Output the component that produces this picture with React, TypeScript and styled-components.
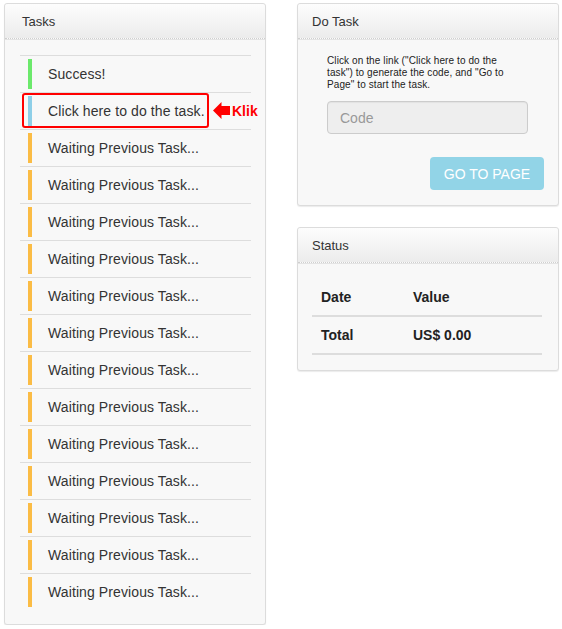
import React from 'react';
import styled, { createGlobalStyle } from 'styled-components';

const GlobalStyle = createGlobalStyle`
  body {
    margin: 0;
    background: #fff;
    font-family: "Liberation Sans", Arial, sans-serif;
    color: #333;
  }
`;

const Page = styled.div`
  display: flex;
  align-items: flex-start;
  gap: 31px;
  padding: 3px 0 0 4px;
`;

const Column = styled.div`
  display: flex;
  flex-direction: column;
  gap: 21px;
  width: 262px;
`;

const Panel = styled.div`
  width: 262px;
  box-sizing: border-box;
  background: #f8f8f8;
  border: 1px solid #dcdcdc;
  border-radius: 3px;
  box-shadow: 0 1px 1px rgba(0, 0, 0, 0.08);
`;

const PanelHeader = styled.div<{ $inset?: number }>`
  height: 34px;
  display: flex;
  align-items: center;
  padding-left: ${p => p.$inset ?? 17}px;
  font-size: 13px;
  color: #333;
  background: linear-gradient(#fdfdfd, #ececec);
  border-bottom: 1px dotted #cfcfcf;
  box-shadow: 0 1px 0 #e4e4e4;
  border-radius: 3px 3px 0 0;
`;

const TaskBody = styled.div`
  padding: 16px 14px 14px 15px;
`;

const TaskList = styled.ul`
  list-style: none;
  margin: 0;
  padding: 0;
`;

const TaskRow = styled.li`
  position: relative;
  display: flex;
  align-items: center;
  height: 36px;
  border-top: 1px solid #dddddd;
  padding-left: 8px;
  font-size: 14px;
  letter-spacing: 0.1px;
  color: #333;
`;

const Bar = styled.span<{ $color: string }>`
  width: 4px;
  height: 30px;
  margin-right: 16px;
  background: ${p => p.$color};
`;

const Highlight = styled.span`
  position: absolute;
  left: 2px;
  top: 0;
  width: 187px;
  height: 35px;
  box-sizing: border-box;
  border: 2px solid #ff0000;
  border-radius: 3px;
`;

const Pointer = styled.span`
  position: absolute;
  left: 193px;
  top: 9px;
  display: flex;
  align-items: center;
  gap: 2px;
  color: #ff0000;
  font-weight: bold;
  font-size: 14px;
  letter-spacing: 0;
`;

const DoBody = styled.div`
  padding: 16px 14px 15px 29px;
  display: flex;
  flex-direction: column;
`;

const Hint = styled.p`
  margin: 0;
  font-size: 10px;
  line-height: 12px;
  letter-spacing: 0.1px;
  color: #222;
`;

const CodeInput = styled.input`
  margin-top: 10px;
  width: 201px;
  height: 33px;
  box-sizing: border-box;
  padding: 0 12px;
  font-family: inherit;
  font-size: 14px;
  color: #555;
  background: #eeeeee;
  border: 1px solid #cccccc;
  border-radius: 4px;
  box-shadow: inset 0 1px 1px rgba(0, 0, 0, 0.05);

  &::placeholder {
    color: #999;
  }
`;

const GoButton = styled.button`
  align-self: flex-end;
  margin-top: 23px;
  width: 114px;
  height: 33px;
  border: none;
  border-radius: 4px;
  background: #92d4e7;
  color: #fff;
  font-family: inherit;
  font-size: 14px;
  cursor: not-allowed;
`;

const StatusBody = styled.div`
  padding: 16px 15px 15px 14px;
`;

const StatusTable = styled.table`
  width: 230px;
  border-collapse: collapse;
  font-size: 14px;
  color: #222;

  th, td {
    text-align: left;
    font-weight: bold;
    padding: 8px 8px;
    line-height: 20px;
    border-bottom: 2px solid #dddddd;
  }

  th:first-child, td:first-child {
    width: 76px;
    padding-left: 9px;
  }
`;

const tasks: { label: string; color: string; active?: boolean }[] = [
  { label: 'Success!', color: '#6ce96c' },
  { label: 'Click here to do the task.', color: '#8ecfe8', active: true },
  ...Array.from({ length: 13 }, () => ({ label: 'Waiting Previous Task...', color: '#fbbc45' })),
];

const Arrow = () => (
  <svg width="17" height="17" viewBox="0 0 17 17">
    <path d="M0 8.5 L8.5 0 L8.5 4 L17 4 L17 13 L8.5 13 L8.5 17 Z" fill="#ff0000" />
  </svg>
);

export default function App() {
  return (
    <>
      <GlobalStyle />
      <Page>
        <Panel>
          <PanelHeader>Tasks</PanelHeader>
          <TaskBody>
            <TaskList>
              {tasks.map((t, i) => (
                <TaskRow key={i}>
                  <Bar $color={t.color} />
                  {t.label}
                  {t.active && (
                    <>
                      <Highlight />
                      <Pointer>
                        <Arrow />
                        Klik
                      </Pointer>
                    </>
                  )}
                </TaskRow>
              ))}
            </TaskList>
          </TaskBody>
        </Panel>

        <Column>
          <Panel>
            <PanelHeader $inset={14}>Do Task</PanelHeader>
            <DoBody>
              <Hint>
                Click on the link ("Click here to do the
                <br />
                task") to generate the code, and "Go to
                <br />
                Page" to start the task.
              </Hint>
              <CodeInput placeholder="Code" />
              <GoButton disabled>GO TO PAGE</GoButton>
            </DoBody>
          </Panel>

          <Panel>
            <PanelHeader $inset={14}>Status</PanelHeader>
            <StatusBody>
              <StatusTable>
                <thead>
                  <tr>
                    <th>Date</th>
                    <th>Value</th>
                  </tr>
                </thead>
                <tbody>
                  <tr>
                    <td>Total</td>
                    <td>US$ 0.00</td>
                  </tr>
                </tbody>
              </StatusTable>
            </StatusBody>
          </Panel>
        </Column>
      </Page>
    </>
  );
}
